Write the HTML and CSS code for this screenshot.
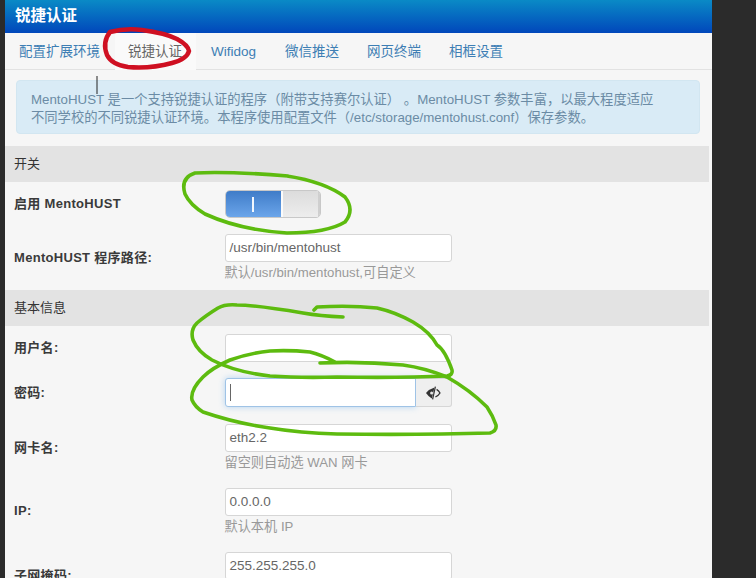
FILE: index.html
```html
<!DOCTYPE html>
<html lang="zh-CN">
<head>
<meta charset="utf-8">
<title>锐捷认证</title>
<link rel="stylesheet" href="styles.css">
</head>
<body>
<main class="panel">
  <header class="panel-title">锐捷认证</header>
  <nav class="tabs">
    <a class="tab">配置扩展环境</a>
    <a class="tab tab-active">锐捷认证</a>
    <a class="tab">Wifidog</a>
    <a class="tab">微信推送</a>
    <a class="tab">网页终端</a>
    <a class="tab">相框设置</a>
  </nav>
  <div class="alert">MentoHUST 是一个支持锐捷认证的程序（附带支持赛尔认证） 。MentoHUST 参数丰富，以最大程度适应<br>不同学校的不同锐捷认证环境。本程序使用配置文件（/etc/storage/mentohust.conf）保存参数。</div>

  <h2 class="section">开关</h2>
  <div class="row">
    <div class="label">启用 MentoHUST</div>
    <div class="field">
      <div class="switch"><span class="switch-on"><i class="switch-bar"></i></span><span class="switch-off"></span></div>
    </div>
  </div>
  <div class="row">
    <div class="label">MentoHUST 程序路径:</div>
    <div class="field">
      <div class="input">/usr/bin/mentohust</div>
      <div class="help">默认/usr/bin/mentohust,可自定义</div>
    </div>
  </div>

  <h2 class="section">基本信息</h2>
  <div class="row">
    <div class="label">用户名:</div>
    <div class="field"><div class="input"></div></div>
  </div>
  <div class="row row-group">
    <div class="label">密码:</div>
    <div class="field">
      <div class="group">
        <div class="input input-focus"><i class="caret"></i></div>
        <div class="addon">
          <svg class="eye" viewBox="0 0 16 14" width="16" height="14" aria-hidden="true">
            <path d="M1 7 Q4.5 3 9.5 1.6 L6.8 12.6 Q3.6 10.8 1 7Z" fill="#333"/>
            <circle cx="6.6" cy="7" r="1.5" fill="#e8e8e8"/>
            <path d="M10.4 0.6 L7.6 13.4" stroke="#333" stroke-width="1.2"/>
            <path d="M11.6 3.4 Q13.8 4.8 15 7 Q13.8 9.2 10.4 11" fill="none" stroke="#333" stroke-width="1.3"/>
          </svg>
        </div>
      </div>
    </div>
  </div>
  <div class="row">
    <div class="label">网卡名:</div>
    <div class="field">
      <div class="input">eth2.2</div>
      <div class="help">留空则自动选 WAN 网卡</div>
    </div>
  </div>
  <div class="row">
    <div class="label">IP:</div>
    <div class="field">
      <div class="input">0.0.0.0</div>
      <div class="help">默认本机 IP</div>
    </div>
  </div>
  <div class="row">
    <div class="label">子网掩码:</div>
    <div class="field">
      <div class="input">255.255.255.0</div>
      <div class="help"></div>
    </div>
  </div>
</main>
<svg class="marks" viewBox="0 0 756 578" width="756" height="578" aria-hidden="true">
  <path class="pointer" d="M97 76 V94"/>
  <path class="mark-red" d="M110 32 Q125 28 142 30 Q165 33 177 39 Q188 45 189 51 Q187 59 172 63 Q150 69 128 67 Q112 65 107 55 Q102 42 110 32Z"/>
  <path class="mark-green" d="M288 176 Q225 171 195 173 Q180 178 185 194 Q190 205 205 214 Q240 230 287 233 Q327 233 345 222 Q355 210 345 197 Q325 182 287 176"/>
  <path class="mark-green" d="M343 317 Q320 316 303 313 Q255 305 237 305 Q225 304 218 308 Q205 316 197 323 Q190 330 193 340 Q198 352 212 360 Q235 372 270 376 Q300 378 337 377 Q400 378 447 376 Q453 375 452 370 Q445 350 437 345 Q430 332 413 322 Q395 312 377 308 Q350 305 317 307 L314 310"/>
  <path class="mark-green" d="M335 362 Q322 355 310 352 Q290 350 270 351 Q250 353 230 360 Q212 368 203 377 Q190 390 192 400 Q195 407 203 412 Q235 423 270 428 Q300 433 337 434 Q420 435 490 433 Q497 431 496 425 Q493 416 487 407 Q470 390 447 377 Q425 368 403 365 Q360 361 320 363"/>
</svg>
</body>
</html>
```
FILE: styles.css
```css
* { box-sizing: border-box; }
html, body { margin: 0; height: 578px; overflow: hidden; background: #2b2b2b; }
body {
  position: relative;
  font-family: "Liberation Sans", "Noto Sans CJK SC", sans-serif;
  font-size: 13px;
  color: #333;
}
.panel {
  width: 707px;
  height: 578px;
  margin-left: 5px;
  background: #f6f6f6;
  overflow: hidden;
}
.panel-title {
  height: 33px;
  padding-left: 10px;
  line-height: 32px;
  font-size: 15.5px;
  font-weight: bold;
  color: #fff;
  background: linear-gradient(#0a8ac6, #0147bb);
}
.tabs {
  height: 37px;
  display: flex;
  padding-left: 4px;
  border-bottom: 1px solid #e2e2e2;
}
.tab {
  padding: 0 10px;
  line-height: 38px;
  font-size: 13.5px;
  color: #3d7eb4;
}
.tab:nth-child(3) { margin-left: 5px; }
.tab:nth-child(4) { margin-left: 9px; }
.tab:nth-child(n+5) { margin-left: 8px; }
.tab-active {
  width: 81px;
  margin-left: 5px;
  padding: 0 0 0 13px;
  background: #fafafa;
  color: #666;
  height: 37px;
}
.alert {
  margin: 10px 12px 0 11px;
  height: 54px;
  padding: 10px 0 0 14px;
  background: #d9ebf6;
  border: 1px solid #d2e6f1;
  border-radius: 4px;
  line-height: 18px;
  font-size: 13.3px;
  white-space: nowrap;
  color: #6b8ba5;
}
.section {
  margin: 12px 3px 0 0;
  height: 36px;
  padding-left: 9px;
  line-height: 36px;
  font-size: 13px;
  font-weight: normal;
  color: #333;
  background: #e3e3e3;
}
.row + .section { margin-top: 0; }
.row {
  display: flex;
  align-items: center;
  padding: 8px 0;
}
.label {
  width: 219.5px;
  padding: 0 0 3px 9px;
  font-size: 13px;
  font-weight: bold;
  letter-spacing: 0.3px;
  color: #3a3a3a;
}
.field { width: 227px; }
.switch {
  display: flex;
  width: 96px;
  height: 28px;
  border-radius: 5px;
  overflow: hidden;
  border: 1px solid #c8c8c8;
}
.switch-on {
  width: 55px;
  display: flex;
  align-items: center;
  justify-content: center;
  background: linear-gradient(#3f7cc8, #6ba5ea);
}
.switch-bar { width: 2px; height: 15px; background: #f2f7fd; }
.switch-off {
  flex: 1;
  background: linear-gradient(#dcdcdc, #ededed);
  border-left: 2px solid #fbfbfb;
  border-right: 2px solid #cfcfcf;
}
.input {
  height: 28px;
  padding-left: 4px;
  line-height: 26px;
  font-size: 13.5px;
  color: #666;
  background: #fff;
  border: 1px solid #d6d6d6;
  border-radius: 3px;
}
.help {
  height: 20px;
  line-height: 22px;
  font-size: 13.2px;
  color: #999;
}
.group { display: flex; height: 30px; padding-bottom: 1px; }
.input-focus {
  flex: 1;
  height: 29px;
  display: flex;
  align-items: center;
  border-color: #9fc3e6;
  border-radius: 3px 0 0 3px;
  box-shadow: 0 0 6px rgba(100, 170, 235, 0.45);
}
.caret { width: 1px; height: 17px; background: #666; }
.addon {
  width: 36px;
  height: 29px;
  display: flex;
  align-items: center;
  justify-content: center;
  background: #efefef;
  border: 1px solid #d6d6d6;
  border-left: 0;
  border-radius: 0 3px 3px 0;
}
.marks { position: absolute; left: 0; top: 0; pointer-events: none; }
.pointer { stroke: #222; stroke-width: 1; fill: none; }
.mark-red {
  fill: none;
  stroke: #cf1022;
  stroke-width: 4.5;
  stroke-linecap: round;
  stroke-linejoin: round;
}
.mark-green {
  fill: none;
  stroke: #5dbb0f;
  stroke-width: 3.6;
  stroke-linecap: round;
  stroke-linejoin: round;
}
```
